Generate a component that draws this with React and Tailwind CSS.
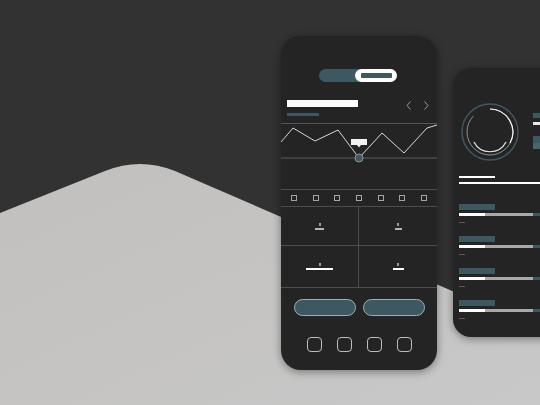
import React from 'react';

const teal = 'bg-[#3e5862]';

const Chevron = ({ dir }) => (
  <svg width="6" height="9" viewBox="0 0 6 9" className="overflow-visible">
    <polyline
      points={dir === 'left' ? '4.5,0.5 1,4.5 4.5,8.5' : '1.5,0.5 5,4.5 1.5,8.5'}
      fill="none"
      stroke="#9a9a9a"
      strokeWidth="1"
    />
  </svg>
);

const Chart = () => (
  <svg width="156" height="34" viewBox="0 0 156 34" className="block overflow-visible">
    <polyline
      points="0,18 12,4 34,17 57,6 78,34 101,9 123,29 146,4 156,1"
      fill="none"
      stroke="#d8d8d8"
      strokeWidth="1"
    />
    <line x1="0" y1="34" x2="156" y2="34" stroke="#5a5a5a" strokeWidth="1" />
    <rect x="70" y="15" width="16" height="6" fill="#f2f2f2" />
    <polygon points="76,21 80,21 78,23.5" fill="#f2f2f2" />
    <circle cx="78" cy="34" r="4" fill="#3e5862" stroke="#8a9599" strokeWidth="1" />
  </svg>
);

const Ring = () => (
  <svg width="60" height="60" viewBox="0 0 60 60" className="block">
    <circle cx="30" cy="30" r="28" fill="none" stroke="#3e5862" strokeWidth="1.5" />
    <circle
      cx="30"
      cy="30"
      r="23"
      fill="none"
      stroke="#8c9496"
      strokeWidth="1"
      strokeDasharray="125 20"
      transform="rotate(-90 30 30)"
    />
    <path d="M30 7 A23 23 0 0 1 50 41" fill="none" stroke="#f0f0f0" strokeWidth="1.2" />
    <path d="M46 40 A18 18 0 0 1 14 40" fill="none" stroke="#e6e6e6" strokeWidth="1.2" />
  </svg>
);

const Cell = ({ bar, right, top }) => (
  <div
    className={`flex flex-col items-center justify-center gap-[2px] ${right ? '' : 'border-r'} ${top ? 'border-b' : ''} border-[#4d4d4d]`}
  >
    <div className="w-[2px] h-[3px] bg-[#9a9a9a]" />
    <div className={`h-[2px] ${bar}`} />
  </div>
);

const PhoneMain = () => (
  <div className="w-[156px] h-[334px] shrink-0 rounded-[20px] bg-[#232423] shadow-[0_2px_8px_rgba(0,0,0,0.4)] overflow-hidden flex flex-col">
    <div className="pt-[33px] flex justify-center">
      <div className="flex h-[13px] -ml-[2px]">
        <div className={`w-[40px] h-full rounded-l-full ${teal}`} />
        <div className="w-[42px] h-full -ml-[4px] rounded-full bg-white pl-[6px] pr-[5px] py-[4px]">
          <div className={`w-full h-full rounded-[1px] ${teal}`} />
        </div>
      </div>
    </div>

    <div className="mt-[18px] px-[6px] flex justify-between items-start">
      <div className="flex flex-col gap-[6px]">
        <div className="w-[71px] h-[7px] bg-white" />
        <div className={`w-[32px] h-[3px] ${teal}`} />
      </div>
      <div className="flex gap-[11px] pr-[2px] pt-[1px]">
        <Chevron dir="left" />
        <Chevron dir="right" />
      </div>
    </div>

    <div className="mt-[7px] border-t border-[#555] h-[34px]">
      <Chart />
    </div>
    <div className="h-[32px]" />
    <div className="h-[18px] border-t border-b border-[#4d4d4d] flex justify-between items-center px-[10px]">
      {[0, 1, 2, 3, 4, 5, 6].map((i) => (
        <div key={i} className="w-[6px] h-[6px] border border-[#a5a5a5]" />
      ))}
    </div>
    <div className="grid grid-cols-2 grid-rows-[39px_41px] border-b border-[#4d4d4d]">
      <Cell bar="w-[9px] bg-[#b5b5b5]" top />
      <Cell bar="w-[7px] bg-[#b5b5b5]" top right />
      <Cell bar="w-[27px] bg-white" />
      <Cell bar="w-[11px] bg-white" right />
    </div>

    <div className="mt-[11px] flex justify-center gap-[7px]">
      <div className={`w-[62px] h-[17px] rounded-full border border-[#9fb0b4] ${teal}`} />
      <div className={`w-[62px] h-[17px] rounded-full border border-[#9fb0b4] ${teal}`} />
    </div>

    <div className="mt-[21px] flex justify-center gap-[15px]">
      {[0, 1, 2, 3].map((i) => (
        <div key={i} className="w-[15px] h-[15px] rounded-[4px] border border-[#bdbdbd]" />
      ))}
    </div>
  </div>
);

const StatRow = () => (
  <div className="h-[32px] flex flex-col">
    <div className={`w-[36px] h-[6px] ${teal}`} />
    <div className="mt-[3px] flex h-[3px]">
      <div className="w-[26px] bg-white" />
      <div className="w-[48px] bg-[#a9a9a9]" />
      <div className="w-[20px] bg-[#3e5862]" />
    </div>
    <div className="mt-[6px] w-[6px] h-[1px] bg-[#5a5a5a]" />
  </div>
);

const PhoneSide = () => (
  <div className="mt-[32px] w-[110px] h-[269px] shrink-0 rounded-[18px] bg-[#232423] shadow-[0_2px_8px_rgba(0,0,0,0.4)] overflow-hidden flex flex-col">
    <div className="pt-[34px] pl-[7px] flex">
      <Ring />
      <div className="ml-[13px] mt-[11px] flex flex-col">
        <div className={`w-[20px] h-[5px] ${teal}`} />
        <div className="mt-[4px] w-[20px] h-[3px] bg-[#e8e8e8]" />
        <div className={`mt-[11px] w-[20px] h-[7px] ${teal}`} />
        <div className="w-[20px] h-[6px] bg-[#4a666c]" />
      </div>
    </div>
    <div className="mt-[14px] px-[6px] flex flex-col gap-[4px]">
      <div className="w-[36px] h-[2px] bg-white" />
      <div className="w-full h-[2px] bg-white" />
    </div>
    <div className="mt-[20px] px-[6px] flex flex-col">
      <StatRow />
      <StatRow />
      <StatRow />
      <StatRow />
    </div>
  </div>
);

export default function App() {
  return (
    <div className="relative w-[540px] h-[405px] overflow-hidden bg-[#323232]">
      <svg
        className="absolute inset-0"
        width="540"
        height="405"
        viewBox="0 0 540 405"
      >
        <defs>
          <linearGradient id="hill" x1="0" y1="0" x2="1" y2="1">
            <stop offset="0" stopColor="#c2c0be" />
            <stop offset="1" stopColor="#c8c8c8" />
          </linearGradient>
        </defs>
        <path
          d="M0 213 L105 171 Q140 157 175 171 L540 329 L540 405 L0 405 Z"
          fill="url(#hill)"
        />
      </svg>
      <div className="relative flex items-start gap-[16px] pl-[281px] pt-[36px]">
        <PhoneMain />
        <PhoneSide />
      </div>
    </div>
  );
}
